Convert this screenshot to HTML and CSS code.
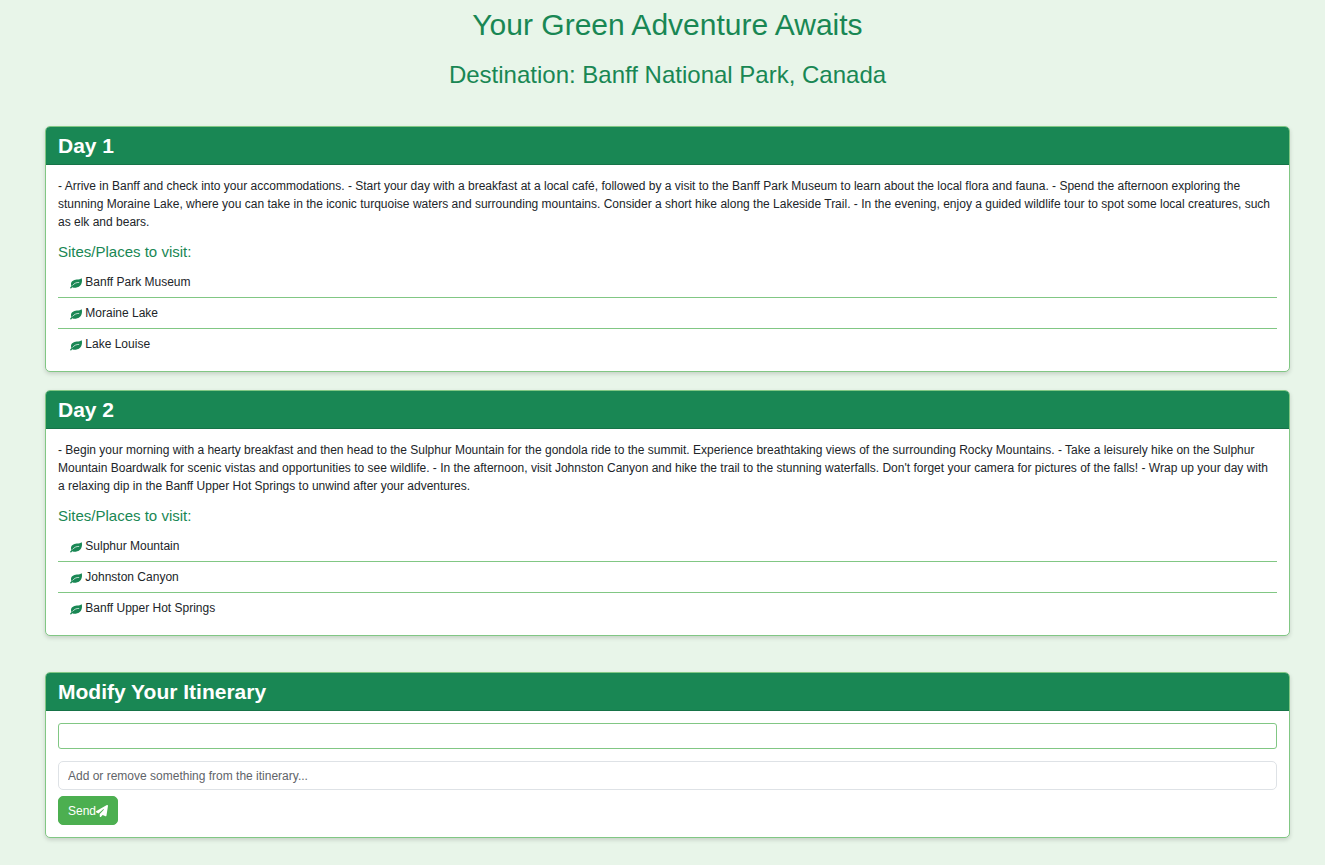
FILE: index.html
```html
<!DOCTYPE html>
<html lang="en">
<head>
<meta charset="utf-8">
<meta name="viewport" content="width=device-width, initial-scale=1">
<title>Your Green Adventure Awaits</title>
<link rel="stylesheet" href="styles.css">
</head>
<body>
<svg class="sprite" aria-hidden="true">
  <symbol id="leaf" viewBox="0 0 12 11"><path d="M11.7.3C10.6 1.2 8.9 1.4 6.8 1.6 3.4 1.9 1 3.6 1 6.2c0 .7.2 1.2.5 1.7L.2 9.4c-.5.7.5 1.6 1.1.9l1-1.100c1 .5 2.300.7 3.600.5C9.600 9.400 12 6.600 12 2.600c0-.9-.1-1.700-.3-2.300z"/><path class="vein" d="M8.800 4.400C6.200 4.400 4.300 5.300 2.700 7.200"/></symbol>
  <symbol id="plane" viewBox="0 0 512 512"><path d="M498.100 5.600c10.100 7 15.400 19.100 13.500 31.200l-64 416c-1.500 9.700-7.400 18.200-16 23s-18.900 5.400-28 1.600L284 427.700l-68.500 74.100c-8.900 9.700-22.900 12.900-35.200 8.100S160 493.200 160 480V396.400c0-4 1.500-7.800 4.200-10.700L331.800 202.800c5.800-6.300 5.600-16-.4-22s-15.700-6.400-22-.7L106 360.800 17.700 316.600C7.100 311.300.3 300.700 0 288.900s5.900-22.800 16.100-28.700l448-256c10.700-6.100 23.900-5.500 34 1.400z"/></symbol>
</svg>
<main class="container">
  <h1 class="title">Your Green Adventure Awaits</h1>
  <h2 class="destination">Destination: Banff National Park, Canada</h2>

  <section class="days">
    <article class="card">
      <h3 class="card-header">Day 1</h3>
      <div class="card-body">
        <p class="description">- Arrive in Banff and check into your accommodations. - Start your day with a breakfast at a local café, followed by a visit to the Banff Park Museum to learn about the local flora and fauna. - Spend the afternoon exploring the stunning Moraine Lake, where you can take in the iconic turquoise waters and surrounding mountains. Consider a short hike along the Lakeside Trail. - In the evening, enjoy a guided wildlife tour to spot some local creatures, such as elk and bears.</p>
        <h4 class="sites-title">Sites/Places to visit:</h4>
        <ul class="sites">
          <li class="site"><svg class="leaf"><use href="#leaf"/></svg> Banff Park Museum</li>
          <li class="site"><svg class="leaf"><use href="#leaf"/></svg> Moraine Lake</li>
          <li class="site"><svg class="leaf"><use href="#leaf"/></svg> Lake Louise</li>
        </ul>
      </div>
    </article>
    <article class="card">
      <h3 class="card-header">Day 2</h3>
      <div class="card-body">
        <p class="description">- Begin your morning with a hearty breakfast and then head to the Sulphur Mountain for the gondola ride to the summit. Experience breathtaking views of the surrounding Rocky Mountains. - Take a leisurely hike on the Sulphur Mountain Boardwalk for scenic vistas and opportunities to see wildlife. - In the afternoon, visit Johnston Canyon and hike the trail to the stunning waterfalls. Don't forget your camera for pictures of the falls! - Wrap up your day with a relaxing dip in the Banff Upper Hot Springs to unwind after your adventures.</p>
        <h4 class="sites-title">Sites/Places to visit:</h4>
        <ul class="sites">
          <li class="site"><svg class="leaf"><use href="#leaf"/></svg> Sulphur Mountain</li>
          <li class="site"><svg class="leaf"><use href="#leaf"/></svg> Johnston Canyon</li>
          <li class="site"><svg class="leaf"><use href="#leaf"/></svg> Banff Upper Hot Springs</li>
        </ul>
      </div>
    </article>
  </section>

  <section class="card">
    <h3 class="card-header">Modify Your Itinerary</h3>
    <form class="card-body">
      <div class="chat-log" role="log"></div>
      <input class="message" type="text" aria-label="Itinerary change" placeholder="Add or remove something from the itinerary...">
      <button class="send" type="button">Send<svg class="plane"><use href="#plane"/></svg></button>
    </form>
  </section>
</main>
</body>
</html>
```
FILE: styles.css
```css
* {
  box-sizing: border-box;
}

body {
  margin: 0;
  background: #e8f5e9;
  color: #212529;
  font: 12px/18px "Liberation Sans", Arial, sans-serif;
}

.sprite {
  display: none;
}

.container {
  padding: 7px 35px 27px 45px;
}

.title,
.destination {
  margin: 0;
  color: #198754;
  font-weight: 400;
  text-align: center;
}

.title {
  margin-bottom: 17px;
  font-size: 30px;
  line-height: 36px;
}

.destination {
  margin-bottom: 36px;
  font-size: 24px;
  line-height: 30px;
}

.days {
  display: grid;
  gap: 18px;
  margin-bottom: 36px;
}

.card {
  background: #fff;
  border: 1px solid #81c784;
  border-radius: 5px;
  box-shadow: 0 2px 4px rgba(0, 0, 0, 0.15);
}

.card-header {
  margin: 0;
  padding: 6px 12px;
  background: #198754;
  border-bottom: 1px solid #167348;
  border-radius: 4px 4px 0 0;
  color: #fff;
  font-size: 21px;
  font-weight: 700;
  line-height: 25px;
}

.card-body {
  padding: 12px;
}

.description {
  margin: 0 0 12px;
}

.sites-title {
  margin: 0 0 6px;
  color: #198754;
  font-size: 15px;
  font-weight: 400;
  line-height: 18px;
}

.sites {
  margin: 0;
  padding: 0;
  list-style: none;
}

.site {
  padding: 6px 12px;
}

.site + .site {
  border-top: 1px solid #81c784;
}

.leaf {
  width: 12px;
  height: 11px;
  fill: #198754;
  vertical-align: -3px;
}

.vein {
  fill: none;
  stroke: #fff;
  stroke-width: 0.7;
  stroke-linecap: round;
}

.chat-log {
  margin-bottom: 12px;
  padding: 12px;
  border: 1px solid #81c784;
  border-radius: 3px;
}

.message {
  display: block;
  width: 100%;
  height: 29px;
  margin-bottom: 6px;
  padding: 4px 9px;
  background: #fff;
  border: 1px solid #dee2e6;
  border-radius: 5px;
  color: #212529;
  font: inherit;
}

.message::placeholder {
  color: #5f6469;
  opacity: 1;
}

.send {
  display: flex;
  align-items: center;
  height: 29px;
  padding: 4px 9px;
  background: #4caf50;
  border: 1px solid #4caf50;
  border-radius: 5px;
  color: #fff;
  font: inherit;
}

.plane {
  width: 12px;
  height: 12px;
  fill: #fff;
}
```
